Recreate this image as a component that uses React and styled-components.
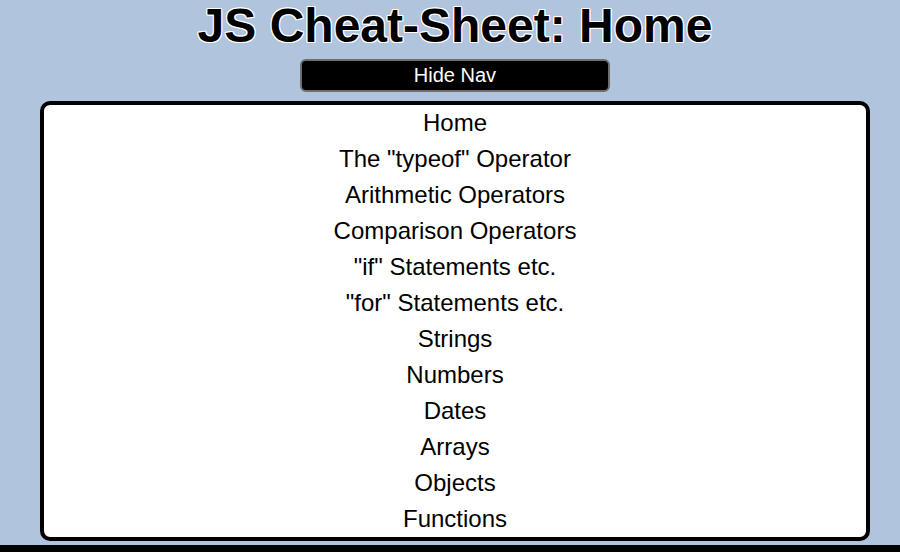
import React from "react";
import styled, { createGlobalStyle } from "styled-components";

const Global = createGlobalStyle`
  html, body {
    margin: 0;
    padding: 0;
    background: #b0c4de;
    font-family: "Liberation Sans", Arial, Helvetica, sans-serif;
    overflow: hidden;
  }
`;

const Page = styled.div`
  display: flex;
  flex-direction: column;
  align-items: stretch;
  padding: 1px 30px 0 40px;
`;

const Title = styled.h1`
  margin: 0;
  font-size: 48px;
  line-height: 50px;
  font-weight: bold;
  text-align: center;
  color: #000;
  text-shadow: -1px -1px 0 #fff, 1px -1px 0 #fff, -1px 1px 0 #fff, 1px 1px 0 #fff,
    0 1px 0 #fff, 0 -1px 0 #fff, 1px 0 0 #fff, -1px 0 0 #fff;
`;

const ToggleButton = styled.button`
  align-self: center;
  margin-top: 8px;
  width: 310px;
  height: 33px;
  background: #000;
  color: #fff;
  border: 2px solid #6e6e6e;
  border-radius: 6px;
  font-family: "Liberation Sans", Arial, Helvetica, sans-serif;
  font-size: 20px;
  padding: 0;
  cursor: pointer;
`;

const Nav = styled.nav`
  margin-top: 9px;
  background: #fff;
  border: 4px solid #000;
  border-radius: 10px;
  display: flex;
  flex-direction: column;
`;

const NavLink = styled.a`
  display: block;
  text-align: center;
  font-size: 24px;
  line-height: 36px;
  color: #000;
  text-decoration: none;
`;

const Footer = styled.div`
  margin-top: 4px;
  height: 7px;
  background: #000;
`;

const items = [
  "Home",
  'The "typeof" Operator',
  "Arithmetic Operators",
  "Comparison Operators",
  '"if" Statements etc.',
  '"for" Statements etc.',
  "Strings",
  "Numbers",
  "Dates",
  "Arrays",
  "Objects",
  "Functions",
];

export default function App() {
  return (
    <>
      <Global />
      <Page>
        <Title>JS Cheat-Sheet: Home</Title>
        <ToggleButton>Hide Nav</ToggleButton>
        <Nav>
          {items.map((t) => (
            <NavLink key={t} href="#">
              {t}
            </NavLink>
          ))}
        </Nav>
      </Page>
      <Footer />
    </>
  );
}
